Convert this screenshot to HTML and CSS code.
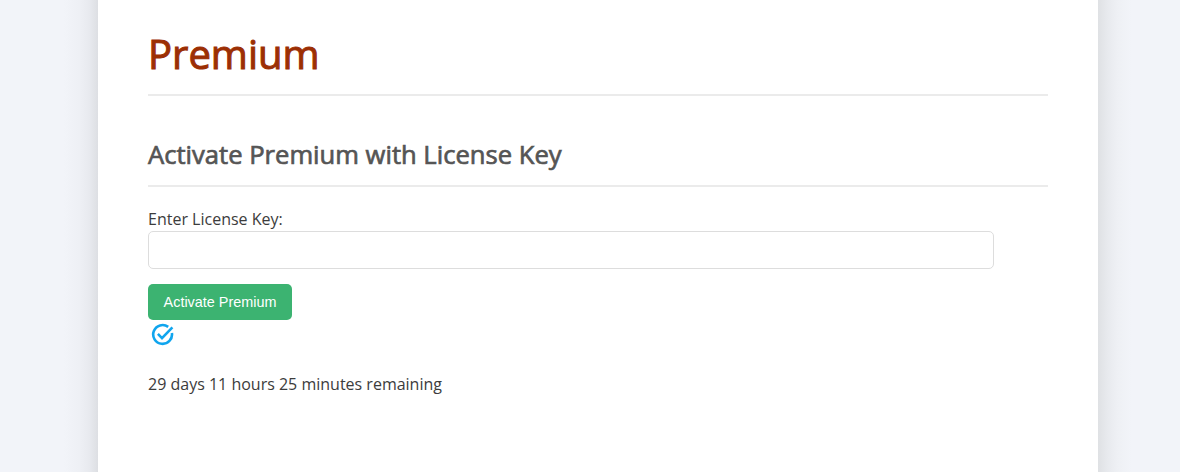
FILE: index.html
```
<!DOCTYPE html>
<html lang="en">
<head>
  <meta charset="UTF-8" />
  <title>Premium</title>
  <link rel="stylesheet" href="styles.css">
</head>
<body>
  <div class="page">
    <h1>Premium</h1>
    <h2>Activate Premium with License Key</h2>

    <form class="license-form">
      <label for="licenseKey">Enter License Key:</label>
      <input type="text" id="licenseKey">
      <button type="button" id="activate">Activate Premium</button>
    </form>

    <svg class="status-icon" viewBox="0 0 24 24" width="24" height="24">
      <path d="M17.2 4.9A9.4 9.4 0 1 0 20.9 11" />
      <path d="M6.9 11.9L11 16.1L21.4 5.3" />
    </svg>

    <p class="remaining">29 days 11 hours 25 minutes remaining</p>
  </div>
</body>
</html>
```

FILE: styles.css
```
/* base */
* { box-sizing: border-box; }
body {
  margin: 0;
  font-family: 'Open Sans', sans-serif;
  font-size: 16px;
  line-height: 22px;
  /* soft shade down both sides of the page column */
  background: linear-gradient(to right,
    #f2f4f9 64px, #eef0f5 79px, #e8eaef 89px, #dddfe3 98px,
    #dfe1e4 1098px, #e8eaee 1108px, #eef0f4 1117px, #f2f4f9 1132px);
  color: #3c3c3c;
}

/* white page column */
.page {
  width: 1000px;
  min-height: 100vh;
  margin-left: 98px;
  padding: 26px 50px 0;
  background: #fff;
}

h1, h2 {
  margin: 0;
  border-bottom: 2px solid #ebebeb;
  font-weight: 400;
}
h1 {
  height: 70px;
  font-size: 40px;
  line-height: 56px;
  color: #9c2f04;
  -webkit-text-stroke: 1px #9c2f04;
}
h2 {
  height: 51px;
  margin-top: 40px;
  font-size: 25.6px;
  line-height: 38px;
  color: #555;
  -webkit-text-stroke: 0.7px #555;
}

/* license form */
.license-form {
  display: flex;
  flex-direction: column;
  align-items: flex-start;
  margin-top: 21px;
}
.license-form label {
  height: 23px;
}
.license-form input {
  width: 846px;
  height: 38px;
  padding: 8px 12px;
  border: 1px solid #ddd;
  border-radius: 5px;
  font-size: 16px;
}
.license-form button {
  width: 144px;
  height: 36px;
  margin-top: 15px;
  padding: 0;
  border: none;
  border-radius: 5px;
  background: #3cb371;
  color: #fff;
  font-family: 'Liberation Sans', Arial, sans-serif;
  font-size: 14.4px;
  cursor: pointer;
}

.status-icon {
  display: block;
  margin: 2px 0 0 3px;
  fill: none;
  stroke: #10a5ee;
  stroke-width: 2.6;
}
.remaining {
  margin: 27px 0 0;
}
```
